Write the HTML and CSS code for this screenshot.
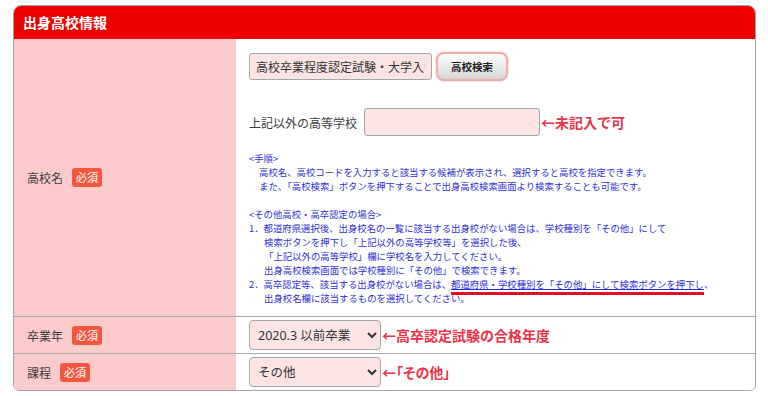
FILE: index.html
```html
<!DOCTYPE html>
<html lang="ja">
<head>
<meta charset="utf-8">
<title>出身高校情報</title>
<link rel="stylesheet" href="styles.css">
</head>
<body>
<div class="panel">
  <div class="panel-head">出身高校情報</div>

  <div class="row">
    <div class="label-cell"><span class="label">高校名</span><span class="badge">必須</span></div>
    <div class="field-cell school-cell">
      <div class="line line-school">
        <input class="text school-input" type="text" value="高校卒業程度認定試験・大学入学資格検定">
        <button class="search-btn" type="button">高校検索</button>
      </div>
      <div class="line line-other">
        <span class="field-label">上記以外の高等学校</span>
        <input class="text other-input" type="text" value="">
        <span class="note">←未記入で可</span>
      </div>
      <div class="help">
        <p>&lt;手順&gt;</p>
        <p class="indent">高校名、高校コードを入力すると該当する候補が表示され、選択すると高校を指定できます。</p>
        <p class="indent">また、「高校検索」ボタンを押下することで出身高校検索画面より検索することも可能です。</p>
        <p>&nbsp;</p>
        <p>&lt;その他高校・高卒認定の場合&gt;</p>
        <p class="num">1．都道府県選択後、出身校名の一覧に該当する出身校がない場合は、学校種別を「その他」にして</p>
        <p class="cont">検索ボタンを押下し「上記以外の高等学校等」を選択した後、</p>
        <p class="cont">「上記以外の高等学校」欄に学校名を入力してください。</p>
        <p class="cont">出身高校検索画面では学校種別に「その他」で検索できます。</p>
        <p class="num">2．高卒認定等、該当する出身校がない場合は、<span class="mark">都道府県・学校種別を「その他」にして検索ボタンを押下し</span>、</p>
        <p class="cont">出身校名欄に該当するものを選択してください。</p>
      </div>
    </div>
  </div>

  <div class="row">
    <div class="label-cell"><span class="label">卒業年</span><span class="badge">必須</span></div>
    <div class="field-cell select-cell">
      <select class="select"><option>2020.3 以前卒業</option></select>
      <span class="note">←高卒認定試験の合格年度</span>
    </div>
  </div>

  <div class="row">
    <div class="label-cell"><span class="label">課程</span><span class="badge">必須</span></div>
    <div class="field-cell select-cell">
      <select class="select"><option>その他</option></select>
      <span class="note note-tight">←「その他」</span>
    </div>
  </div>
</div>
</body>
</html>
```

FILE: styles.css
```css
* { box-sizing: border-box; }

html, body {
  margin: 0;
  padding: 0;
  background: #ffffff;
}

body {
  font-family: "Noto Sans CJK JP", "Noto Sans", sans-serif;
  color: #333333;
}

.panel {
  width: 743px;
  margin: 5px 0 0 13px;
  border: 1px solid #a3a3a3;
  border-radius: 8px 8px 6px 6px;
  overflow: hidden;
}

.panel-head {
  height: 34px;
  margin: -1px -1px 0 -1px;
  background: #ef0000;
  color: #ffffff;
  font-size: 14px;
  font-weight: 700;
  line-height: 34px;
  padding-left: 10px;
}

.row {
  display: grid;
  grid-template-columns: 222px 1fr;
  border-top: 1px solid #a8a8a8;
}

.row:nth-child(2) { border-top: none; }

.label-cell {
  background: #fbcaca;
  display: flex;
  align-items: center;
  gap: 9px;
  padding-left: 13px;
  font-size: 12px;
  color: #3c3c3c;
}

.badge {
  display: inline-block;
  height: 19px;
  line-height: 19px;
  padding: 0 4px;
  background: #f2573f;
  color: #ffffff;
  font-size: 11px;
  border-radius: 3px;
}

.field-cell {
  padding-left: 13px;
  background: #ffffff;
}

.school-cell {
  padding-top: 13px;
  padding-bottom: 11px;
}

.line {
  display: flex;
  align-items: center;
}

.line-school { gap: 4px; height: 29px; }

.line-other { margin-top: 27px; height: 28px; }

.text {
  height: 27px;
  border: 1px solid #a6a6a6;
  border-radius: 3px;
  background: #fde4e4;
  font-family: "Noto Sans CJK JP", sans-serif;
  font-size: 12px;
  color: #333333;
  padding: 0 6px;
  outline: none;
}

.school-input { width: 183px; }

.other-input { width: 176px; height: 28px; margin-left: 7px; }

.search-btn {
  width: 72px;
  height: 29px;
  border: 2px solid #f6a9a9;
  border-radius: 8px;
  background: linear-gradient(#ffffff, #d6d6d6);
  font-family: "Noto Sans CJK JP", sans-serif;
  font-size: 10.5px;
  font-weight: 700;
  color: #222222;
  padding: 0;
  box-shadow: 0 0 2px #f6b0b0;
}

.field-label {
  font-size: 12px;
  color: #3c3c3c;
}

.note {
  color: #e8334a;
  font-size: 14px;
  font-weight: 700;
  margin-left: 1px;
}

.note-tight { font-feature-settings: "palt"; }

.help {
  margin-top: 15px;
  color: #2f2fd6;
  font-size: 9.4px;
  line-height: 14px;
}

.help p { margin: 0; white-space: nowrap; }

.help .indent { padding-left: 10px; }

.help .cont { padding-left: 15px; }

.mark {
  text-decoration: underline;
  text-decoration-color: #2f2fd6;
  border-bottom: 3px solid #e0102a;
  padding-bottom: 1px;
}

.select-cell {
  display: flex;
  align-items: center;
  height: 36px;
}

.select {
  width: 132px;
  height: 30px;
  border: 1px solid #a6a6a6;
  border-radius: 4px;
  background-color: #fde4e4;
  font-family: "Noto Sans", "Noto Sans CJK JP", sans-serif;
  font-size: 12.5px;
  color: #333333;
  padding: 0 4px;
}
```
